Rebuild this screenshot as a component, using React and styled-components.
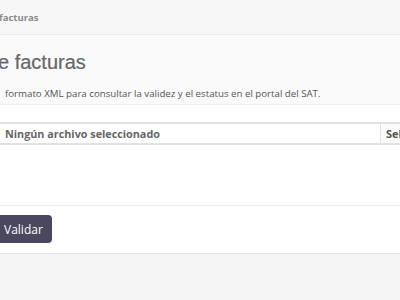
import React from 'react';
import styled, { createGlobalStyle } from 'styled-components';

const GlobalStyle = createGlobalStyle`
  html, body {
    margin: 0;
    padding: 0;
    background: #f5f5f5;
    overflow: hidden;
  }
  body {
    font-family: "Open Sans", "Liberation Sans", sans-serif;
  }
`;

const Page = styled.div`
  width: 400px;
  height: 300px;
  display: flex;
  flex-direction: column;
  background: #f5f5f5;
`;

const TopBar = styled.div`
  height: 35px;
  box-sizing: border-box;
  display: flex;
  align-items: center;
  background: #f7f7f7;
  border-bottom: 1px solid #ececec;
`;

const Crumb = styled.span`
  margin-left: -1px;
  font-size: 9.5px;
  font-weight: 700;
  color: #8a8a8a;
`;

const Header = styled.div`
  background: #fafafa;
  border-bottom: 1px solid #efefef;
  padding: 15px 0 2px;
`;

const Title = styled.h1`
  margin: 0 0 0 -2px;
  font-family: "Liberation Sans", Arial, sans-serif;
  font-size: 20px;
  font-weight: 400;
  color: #666;
  line-height: 24px;
  -webkit-text-stroke: 0.2px #666;
`;

const Lead = styled.p`
  margin: 12px 0 0 5px;
  font-size: 9.7px;
  line-height: 16px;
  color: #555;
`;

const Panel = styled.div`
  background: #fff;
  border-bottom: 1px solid #e3e5ec;
`;

const Body = styled.div`
  padding: 17px 0 60px;
  border-bottom: 1px solid #f0f0f0;
`;

const FileField = styled.div`
  display: flex;
  height: 23px;
  box-sizing: border-box;
  border-top: 2px solid #e2e2e2;
  border-bottom: 2px solid #e2e2e2;
  margin-left: -4px;
`;

const FileName = styled.div`
  flex: 1;
  display: flex;
  align-items: center;
  padding-left: 9px;
  font-size: 10.8px;
  font-weight: 700;
  color: #666;
`;

const Browse = styled.div`
  width: 14px;
  display: flex;
  align-items: center;
  padding-left: 5px;
  border-left: 1px solid #e2e2e2;
  font-size: 11px;
  font-weight: 700;
  color: #555;
  background: #fafafa;
  overflow: hidden;
  white-space: nowrap;
`;

const Footer = styled.div`
  padding: 9px 0 10px;
`;

const Button = styled.button`
  display: block;
  margin-left: -10px;
  height: 28px;
  width: 62px;
  padding: 0 0 0 14px;
  text-align: left;
  border: none;
  border-radius: 4px;
  background: #4b475f;
  color: #fff;
  font-family: "Open Sans", "Liberation Sans", sans-serif;
  font-size: 12px;
  font-weight: 400;
`;

export default function App() {
  return (
    <>
      <GlobalStyle />
      <Page>
        <TopBar>
          <Crumb>facturas</Crumb>
        </TopBar>
        <Header>
          <Title>e facturas</Title>
          <Lead>formato XML para consultar la validez y el estatus en el portal del SAT.</Lead>
        </Header>
        <Panel>
          <Body>
            <FileField>
              <FileName>Ningún archivo seleccionado</FileName>
              <Browse>Seleccionar</Browse>
            </FileField>
          </Body>
          <Footer>
            <Button>Validar</Button>
          </Footer>
        </Panel>
      </Page>
    </>
  );
}
